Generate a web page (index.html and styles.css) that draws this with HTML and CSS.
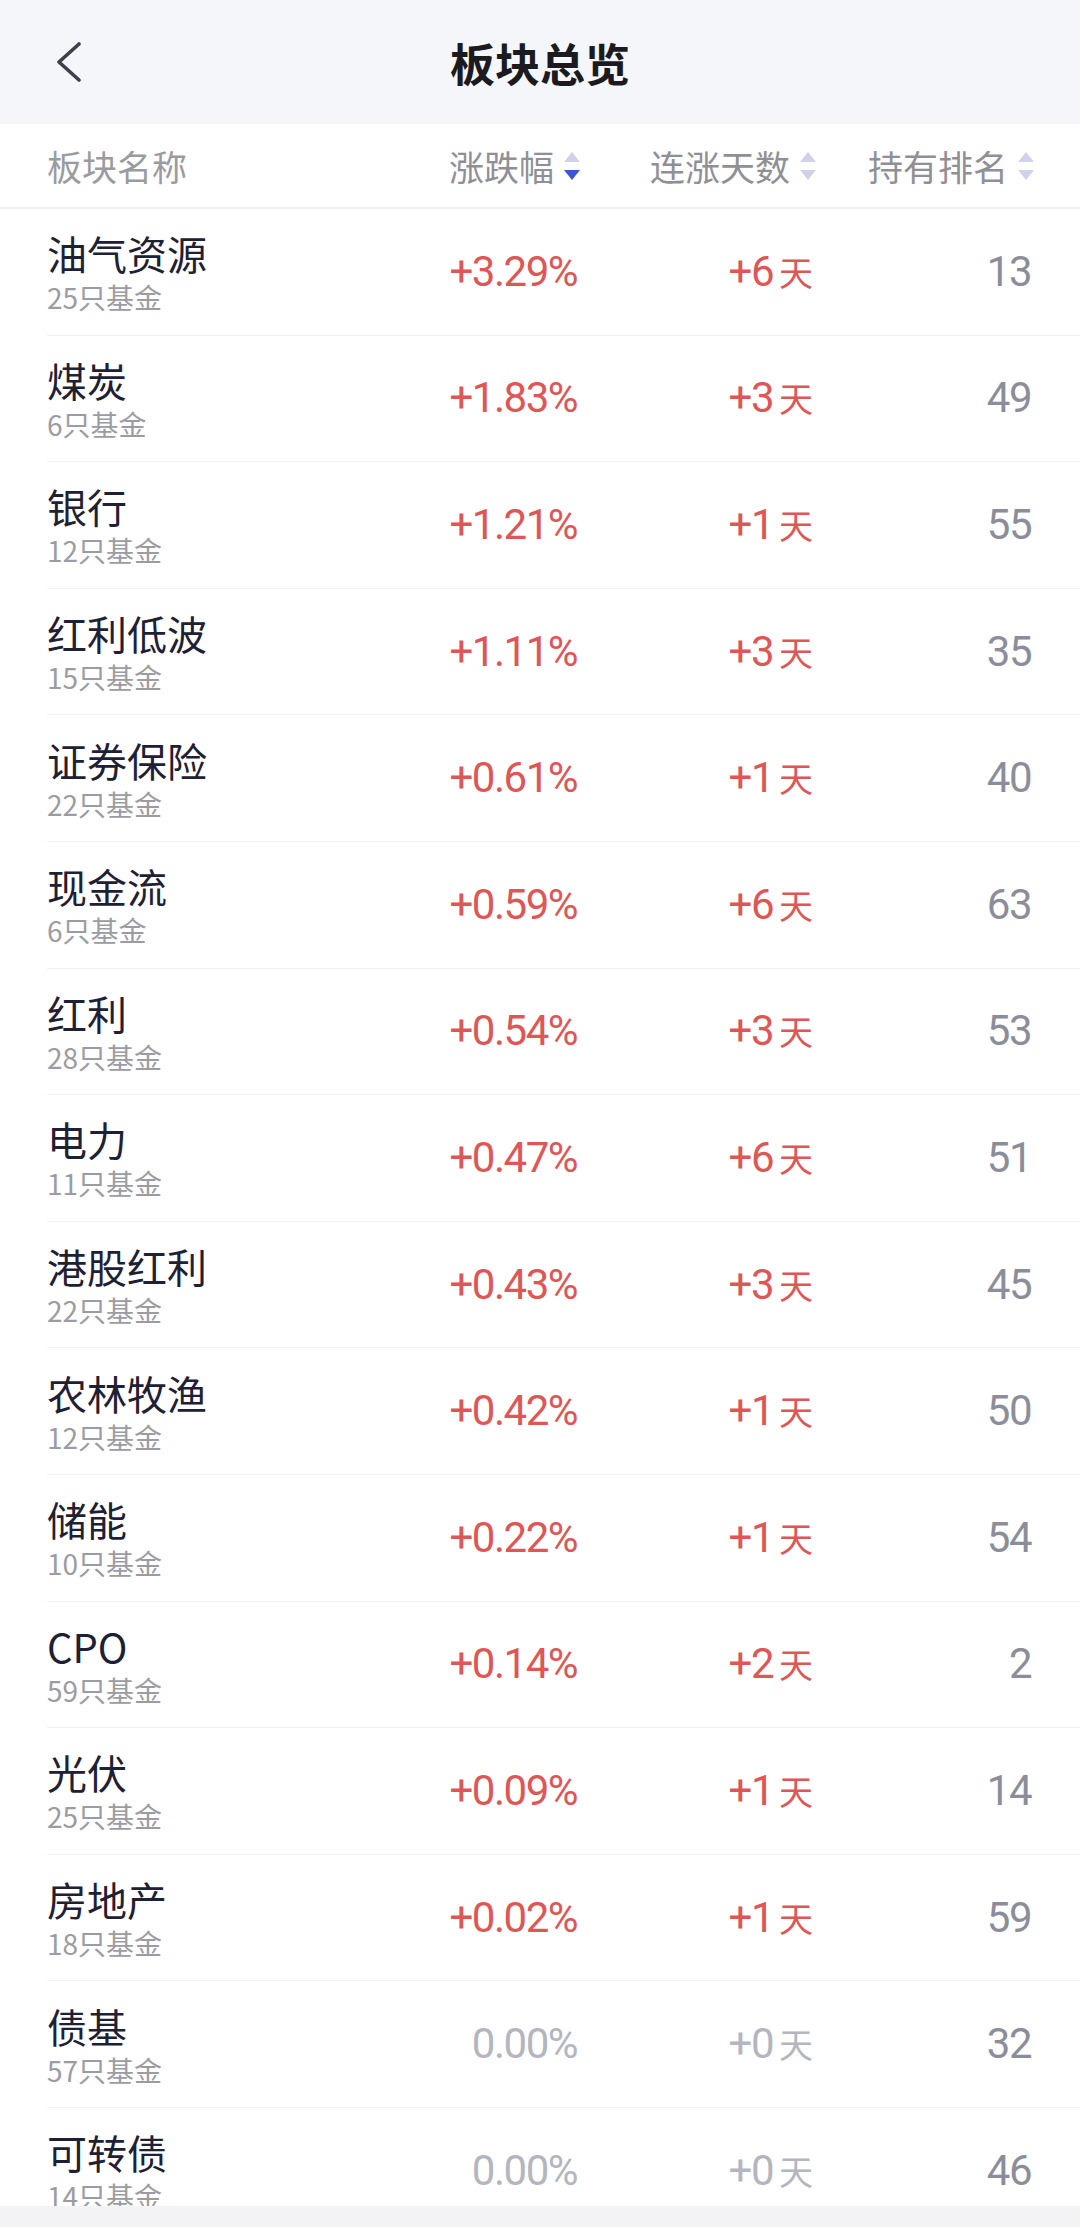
FILE: index.html
```html
<!DOCTYPE html>
<html lang="zh-CN">
<head>
  <meta charset="UTF-8" />
  <meta name="viewport" content="width=device-width, initial-scale=1.0"/>
  <title>板块总览</title>
  <link rel="stylesheet" href="styles.css">
</head>
<body>
  <div class="page">
    <header class="topbar">
      <span class="back">
        <svg width="24" height="40" viewBox="0 0 24 40"><polyline points="22,2 2,20 22,38" fill="none" stroke="#3c3f4c" stroke-width="3.6" stroke-linecap="round" stroke-linejoin="round"/></svg>
      </span>
      <h1>板块总览</h1>
    </header>

    <div class="thead">
      <div class="th th-name">板块名称</div>
      <div class="th">涨跌幅<span class="sort"><i class="up"></i><i class="down on"></i></span></div>
      <div class="th">连涨天数<span class="sort"><i class="up"></i><i class="down"></i></span></div>
      <div class="th">持有排名<span class="sort"><i class="up"></i><i class="down"></i></span></div>
    </div>

    <div class="list">
      <div class="row"><div class="name"><p>油气资源</p><small>25只基金</small></div><div class="num up">+3.29%</div><div class="num up">+6<em>天</em></div><div class="num rank">13</div></div>
      <div class="row"><div class="name"><p>煤炭</p><small>6只基金</small></div><div class="num up">+1.83%</div><div class="num up">+3<em>天</em></div><div class="num rank">49</div></div>
      <div class="row"><div class="name"><p>银行</p><small>12只基金</small></div><div class="num up">+1.21%</div><div class="num up">+1<em>天</em></div><div class="num rank">55</div></div>
      <div class="row"><div class="name"><p>红利低波</p><small>15只基金</small></div><div class="num up">+1.11%</div><div class="num up">+3<em>天</em></div><div class="num rank">35</div></div>
      <div class="row"><div class="name"><p>证券保险</p><small>22只基金</small></div><div class="num up">+0.61%</div><div class="num up">+1<em>天</em></div><div class="num rank">40</div></div>
      <div class="row"><div class="name"><p>现金流</p><small>6只基金</small></div><div class="num up">+0.59%</div><div class="num up">+6<em>天</em></div><div class="num rank">63</div></div>
      <div class="row"><div class="name"><p>红利</p><small>28只基金</small></div><div class="num up">+0.54%</div><div class="num up">+3<em>天</em></div><div class="num rank">53</div></div>
      <div class="row"><div class="name"><p>电力</p><small>11只基金</small></div><div class="num up">+0.47%</div><div class="num up">+6<em>天</em></div><div class="num rank">51</div></div>
      <div class="row"><div class="name"><p>港股红利</p><small>22只基金</small></div><div class="num up">+0.43%</div><div class="num up">+3<em>天</em></div><div class="num rank">45</div></div>
      <div class="row"><div class="name"><p>农林牧渔</p><small>12只基金</small></div><div class="num up">+0.42%</div><div class="num up">+1<em>天</em></div><div class="num rank">50</div></div>
      <div class="row"><div class="name"><p>储能</p><small>10只基金</small></div><div class="num up">+0.22%</div><div class="num up">+1<em>天</em></div><div class="num rank">54</div></div>
      <div class="row"><div class="name"><p>CPO</p><small>59只基金</small></div><div class="num up">+0.14%</div><div class="num up">+2<em>天</em></div><div class="num rank">2</div></div>
      <div class="row"><div class="name"><p>光伏</p><small>25只基金</small></div><div class="num up">+0.09%</div><div class="num up">+1<em>天</em></div><div class="num rank">14</div></div>
      <div class="row"><div class="name"><p>房地产</p><small>18只基金</small></div><div class="num up">+0.02%</div><div class="num up">+1<em>天</em></div><div class="num rank">59</div></div>
      <div class="row"><div class="name"><p>债基</p><small>57只基金</small></div><div class="num flat">0.00%</div><div class="num flat">+0<em>天</em></div><div class="num rank">32</div></div>
      <div class="row"><div class="name"><p>可转债</p><small>14只基金</small></div><div class="num flat">0.00%</div><div class="num flat">+0<em>天</em></div><div class="num rank">46</div></div>
    </div>

    <div class="bottom-bar"></div>
  </div>
</body>
</html>
```

FILE: styles.css
```css
html, body {
  margin: 0;
  padding: 0;
  background: #fff;
}

body {
  font-family: "Noto Sans CJK SC", "Noto Sans", sans-serif;
  color: #1f2235;
}

.page {
  height: 2227px;
  display: flex;
  flex-direction: column;
  overflow: hidden;
}

/* top navigation */
.topbar {
  height: 124px;
  flex: none;
  background: #f5f6fa;
  display: flex;
  align-items: center;
  justify-content: center;
  position: relative;
}

.topbar h1 {
  margin: 0;
  font-size: 45px;
  font-weight: 700;
  color: #1a1a1f;
  line-height: 1;
}

.back {
  position: absolute;
  left: 57px;
  top: 42px;
  display: flex;
}

/* column header */
.thead {
  height: 85px;
  flex: none;
  box-sizing: border-box;
  padding: 0 46px 0 47px;
  border-bottom: 2px solid #f0f1f4;
  display: grid;
  grid-template-columns: 1fr 200px 236px 218px;
  align-items: center;
}

.th {
  font-size: 35px;
  color: #8f9096;
  display: flex;
  align-items: center;
  justify-content: flex-end;
  line-height: 1;
}

.th.th-name {
  justify-content: flex-start;
  color: #9a9ba1;
}

.sort {
  display: flex;
  flex-direction: column;
  gap: 8px;
  margin-left: 10px;
}

.sort i {
  display: block;
  width: 0;
  height: 0;
  border-left: 8px solid transparent;
  border-right: 8px solid transparent;
}

.sort i.up {
  border-bottom: 10px solid #cfd2ea;
}

.sort i.down {
  border-top: 10px solid #cfd2ea;
}

.sort i.down.on {
  border-top-color: #3b54d8;
}

/* list */
.list {
  flex: 1;
  overflow: hidden;
}

.row {
  height: 126.6px;
  box-sizing: border-box;
  margin-left: 47px;
  padding-right: 47px;
  border-bottom: 1px solid #f1f2f5;
  display: grid;
  grid-template-columns: 1fr 200px 236px 218px;
  align-items: center;
}

.name p {
  margin: 0;
  font-size: 40px;
  line-height: 48px;
  color: #1e2033;
}

.name small {
  display: block;
  margin-top: 3px;
  font-size: 28px;
  line-height: 34px;
  color: #9b9ca3;
}

.num {
  text-align: right;
  font-family: Roboto, "Noto Sans CJK SC", sans-serif;
  font-size: 42px;
  letter-spacing: -1.5px;
  padding-right: 2px;
  line-height: 1;
}

.num em {
  font-style: normal;
  font-family: "Noto Sans CJK SC", sans-serif;
  font-size: 34px;
  letter-spacing: 0;
  margin-left: 6px;
}

.num.up {
  color: #de5656;
}

.num.flat {
  color: #b3b6bf;
}

.num.rank {
  color: #8b8e9a;
}

.bottom-bar {
  height: 21px;
  flex: none;
  background: #f3f3f5;
}
```
